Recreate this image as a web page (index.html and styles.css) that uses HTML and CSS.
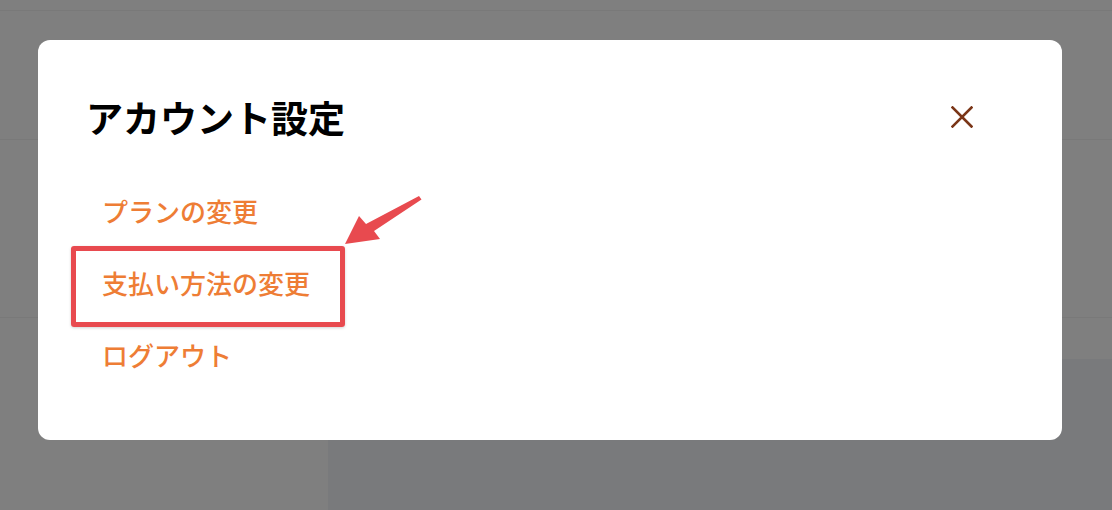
FILE: index.html
```html
<!DOCTYPE html>
<html lang="ja">
<head>
<meta charset="utf-8">
<title>アカウント設定</title>
<link rel="stylesheet" href="styles.css">
</head>
<body>
<div class="backdrop">
  <div class="bg-top"></div>
  <div class="bg-band1"></div>
  <div class="bg-band2"></div>
  <div class="bg-band3"></div>
  <div class="bg-bottom">
    <div class="bg-left"></div>
    <div class="bg-right"></div>
  </div>
</div>

<div class="modal" role="dialog" aria-label="アカウント設定">
  <div class="modal-header">
    <h1 class="modal-title">アカウント設定</h1>
    <button class="close-btn" aria-label="閉じる">
      <svg width="22" height="22" viewBox="0 0 22 22"><path d="M1.5 1.5 L20.5 20.5 M20.5 1.5 L1.5 20.5" stroke="#7a3517" stroke-width="2.6" stroke-linecap="square" fill="none"/></svg>
    </button>
  </div>
  <ul class="menu">
    <li class="menu-item"><a href="#">プランの変更</a></li>
    <li class="menu-item"><a href="#">支払い方法の変更</a></li>
    <li class="menu-item"><a href="#">ログアウト</a></li>
  </ul>
</div>

<div class="annot-box"></div>
<svg class="annot-arrow" width="90" height="60" viewBox="0 0 90 60">
  <polygon points="74,0 76.5,3.5 29,35 35,43 0,48 14,20 21,28" fill="#e84a4f"/>
</svg>
</body>
</html>
```

FILE: styles.css
```css
html, body {
  margin: 0;
  padding: 0;
}
body {
  width: 1112px;
  height: 510px;
  overflow: hidden;
  background: #7f7f7f;
  font-family: "Noto Sans CJK JP", "Noto Sans", sans-serif;
  position: relative;
}
.backdrop {
  display: flex;
  flex-direction: column;
  height: 510px;
}
.bg-top {
  height: 10px;
  border-bottom: 1px solid #797979;
}
.bg-band1 {
  height: 128px;
  border-bottom: 1px solid #797979;
}
.bg-band2 {
  height: 177px;
  border-bottom: 1px solid #797979;
}
.bg-band3 {
  height: 41px;
}
.bg-bottom {
  flex: 1;
  display: flex;
}
.bg-left {
  width: 328px;
  background: #7f7f7f;
}
.bg-right {
  flex: 1;
  background: #797a7c;
}
.modal {
  position: absolute;
  left: 38px;
  top: 40px;
  width: 1024px;
  height: 400px;
  background: #ffffff;
  border-radius: 12px;
  box-sizing: border-box;
  padding: 56px 89px 0 48px;
}
.modal-header {
  display: flex;
  align-items: center;
  justify-content: space-between;
}
.modal-title {
  margin: 0;
  font-size: 37px;
  line-height: 42px;
  font-weight: 700;
  color: #000000;
  letter-spacing: 0;
}
.close-btn {
  border: none;
  background: none;
  padding: 0;
  width: 22px;
  height: 22px;
  display: flex;
  cursor: pointer;
}
.menu {
  list-style: none;
  margin: 36px 0 0 0;
  padding: 0 0 0 16px;
  display: flex;
  flex-direction: column;
}
.menu-item {
  height: 72px;
  display: flex;
  align-items: center;
}
.menu-item a {
  font-size: 26px;
  color: #ee7d35;
  text-decoration: none;
  font-weight: 500;
}
.annot-box {
  position: absolute;
  left: 71px;
  top: 246px;
  width: 274px;
  height: 81px;
  box-sizing: border-box;
  border: 5px solid #e84a4f;
  border-radius: 3px;
  box-shadow: 0 1px 3px rgba(0,0,0,0.18);
}
.annot-arrow {
  position: absolute;
  left: 345px;
  top: 196px;
}
```
